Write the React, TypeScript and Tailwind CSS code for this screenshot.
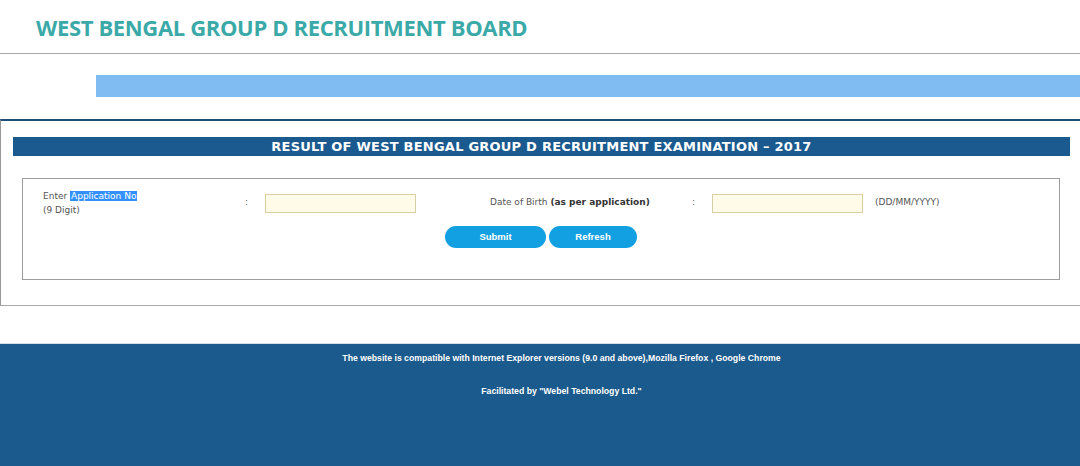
import React from 'react';

// Result lookup page
export default function App() {
  return (
    <div className="w-[1080px] h-[466px] bg-white overflow-hidden flex flex-col">
      {/* Board title */}
      <div className="h-[54px] border-b border-[#a9a9a9] flex items-center pl-[36px]">
        <h1 className="font-['Open_Sans',sans-serif] font-bold text-[22px] leading-none text-[#3aa9a8] tracking-[-0.35px]">
          WEST BENGAL GROUP D RECRUITMENT BOARD
        </h1>
      </div>

      {/* Marquee strip */}
      <div className="mt-[21px] ml-[96px] h-[22px] bg-[#80bbf2]"></div>

      {/* Result panel */}
      <div className="mt-[22px] border-t-2 border-[#1d4f78] border-l border-l-[#9a9a9a] border-b border-b-[#a9a9a9] pt-[16px] pb-[25px]">
        <div className="ml-[12px] mr-[10px] h-[19px] bg-[#1b5a8e] flex items-center justify-center">
          <span className="font-['DejaVu_Sans',sans-serif] font-bold text-[13px] leading-none text-white tracking-[0.23px]">
            RESULT OF WEST BENGAL GROUP D RECRUITMENT EXAMINATION – 2017
          </span>
        </div>

        <div className="mt-[22px] ml-[21px] mr-[20px] h-[102px] border border-[#9d9d9d] font-['DejaVu_Sans',sans-serif] text-[9px] text-[#555]">
          <div className="flex items-center pl-[20px] pt-[10px]">
            <div className="w-[200px] leading-[14px]">
              <div>
                Enter <span className="bg-[#3391ff] text-white px-[1px]">Application No </span>
              </div>
              <div>(9 Digit)</div>
            </div>
            <div className="w-[22px] pl-[2px]">:</div>
            <input className="w-[151px] h-[19px] bg-[#fffbe8] border border-[#d8cfa3] outline-none" />
            <div className="w-[74px]"></div>
            <div className="w-[200px]">
              Date of Birth <span className="font-bold text-[#333]">(as per application)</span>
            </div>
            <div className="w-[22px] pl-[2px]">:</div>
            <input className="w-[151px] h-[19px] bg-[#fffbe8] border border-[#d8cfa3] outline-none" />
            <div className="ml-[12px]">(DD/MM/YYYY)</div>
          </div>

          <div className="mt-[9px] flex justify-center gap-[3px] font-['Liberation_Sans',sans-serif] font-bold text-[9.5px] text-white">
            <button className="w-[101px] h-[22px] rounded-full bg-[#12a0e3]">Submit</button>
            <button className="w-[88px] h-[22px] rounded-full bg-[#12a0e3]">Refresh</button>
          </div>
        </div>
      </div>

      {/* Footer */}
      <div className="mt-[37px] flex-1 bg-[#1b5a8c] border-t border-[#d5dde6] pl-[43px] font-['Liberation_Sans',sans-serif] font-bold text-[8.7px] text-white text-center">
        <p className="mt-[8px]">
          The website is compatible with Internet Explorer versions (9.0 and above),Mozilla Firefox , Google Chrome
        </p>
        <p className="mt-[20px]">Facilitated by "Webel Technology Ltd."</p>
      </div>
    </div>
  );
}
